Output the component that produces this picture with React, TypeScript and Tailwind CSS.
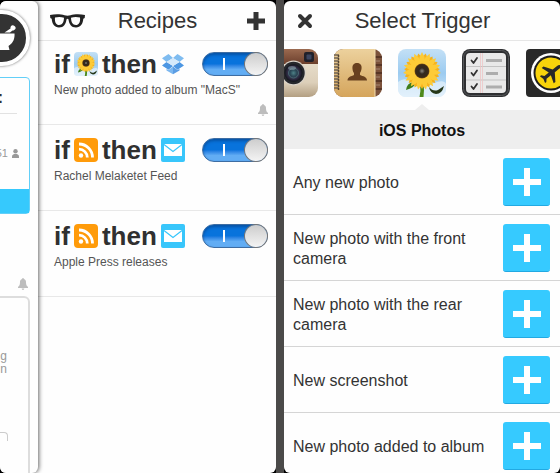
import { useId, useState, type ReactNode } from "react";

function Sunflower({ className }: { className: string }) {
  const id = useId();
  const petals = [0, 24, 48, 72, 96, 120, 144, 168, 192, 216, 240, 264, 288, 312, 336];
  return (
    <svg viewBox="0 0 48 48" className={className} aria-hidden="true">
      <defs>
        <linearGradient id={id} x1="0" y1="0" x2="0" y2="1">
          <stop offset="0" stopColor="#c3e0f6" />
          <stop offset="0.5" stopColor="#9ccbf0" />
          <stop offset="1" stopColor="#cfe7f8" />
        </linearGradient>
        <radialGradient id={`${id}c`}>
          <stop offset="0" stopColor="#8a8780" />
          <stop offset="0.4" stopColor="#33291f" />
          <stop offset="0.85" stopColor="#3a2a18" />
          <stop offset="1" stopColor="#8a5a18" />
        </radialGradient>
        <clipPath id={`${id}r`}>
          <rect width="48" height="48" rx="8" />
        </clipPath>
      </defs>
      <g clipPath={`url(#${id}r)`}>
        <rect width="48" height="48" fill={`url(#${id})`} />
        <path d="M0 33q6-5 12-1t10 5 14-3 12 1v13H0z" fill="#eef7fd" opacity="0.6" />
        <path d="M22 34q1 8-.5 14h4q1-7 0-14z" fill="#4f8a1c" />
        <path d="M8 41q1-7 7-8 3 0 3 1-2 5-10 7z" fill="#3f7d1c" />
        <path d="M31 38q4 5 9 3 3-2 6-4-2 8-8 8-6-1-7-7z" fill="#26381a" />
        {petals.map((a) => (
          <path key={a} d="M24 22Q17 12 24 4q7 8 0 18z" fill="#f6b21c" transform={`rotate(${a + 12} 24 22)`} />
        ))}
        {petals.map((a) => (
          <path key={a} d="M24 22Q18 12 24 3q6 9 0 19z" fill="#fdcb37" transform={`rotate(${a} 24 22)`} />
        ))}
        <circle cx="24" cy="22" r="7.500" fill={`url(#${id}c)`} />
      </g>
    </svg>
  );
}

function Instagram() {
  return (
    <svg viewBox="0 0 48 48" className="size-12" aria-hidden="true">
      <defs>
        <linearGradient id="ig-body" x1="0" y1="0" x2="0" y2="1">
          <stop offset="0" stopColor="#efe6d6" />
          <stop offset="0.7" stopColor="#dccfb9" />
          <stop offset="1" stopColor="#b39f82" />
        </linearGradient>
        <linearGradient id="ig-top" x1="0" y1="0" x2="0" y2="1">
          <stop offset="0" stopColor="#9b6a50" />
          <stop offset="1" stopColor="#6c3f2c" />
        </linearGradient>
        <radialGradient id="ig-lens">
          <stop offset="0" stopColor="#4f8288" />
          <stop offset="0.35" stopColor="#2c4a58" />
          <stop offset="0.7" stopColor="#2f2a42" />
          <stop offset="1" stopColor="#12151a" />
        </radialGradient>
      </defs>
      <rect width="48" height="48" rx="9" fill="url(#ig-body)" />
      <path d="M0 15V9a9 9 0 0 1 9-9h30a9 9 0 0 1 9 9v6z" fill="url(#ig-top)" />
      <rect x="34" y="3" width="10" height="10" rx="2" fill="#20202a" />
      <rect x="36.500" y="5.500" width="5" height="5" rx="1" fill="#3c4560" />
      <circle cx="23.500" cy="24" r="12.500" fill="#d8d2c8" />
      <circle cx="23.500" cy="24" r="11.200" fill="#26282c" />
      <circle cx="23.500" cy="24" r="9" fill="url(#ig-lens)" />
      <circle cx="23.500" cy="24" r="5" fill="none" stroke="#4e7078" strokeWidth="0.8" />
      <ellipse cx="22" cy="19" rx="4" ry="2" fill="#9cb4bb" opacity="0.5" />
    </svg>
  );
}

function Contacts() {
  const rings = [6, 9, 12, 15, 18, 21, 24, 27, 30, 33, 36, 39];
  return (
    <svg viewBox="0 0 48 48" className="size-12" aria-hidden="true">
      <defs>
        <linearGradient id="book" x1="0" y1="0" x2="0" y2="1">
          <stop offset="0" stopColor="#ecd19d" />
          <stop offset="1" stopColor="#d5a55c" />
        </linearGradient>
      </defs>
      <rect width="48" height="48" rx="9" fill="#7b523b" />
      <path d="M41 8h7M41 16h7M41 24h7M41 32h7M41 40h7" stroke="#4c2d1f" strokeWidth="1.5" />
      <path d="M42 12h4M42 20h4M42 28h4M42 36h4" stroke="#a58672" strokeWidth="1" />
      <path d="M9 0h32v48H9a9 9 0 0 1-9-9V9a9 9 0 0 1 9-9z" fill="url(#book)" />
      <path d="M41 0v48" stroke="#f3ddb2" strokeWidth="1" />
      {rings.map((y) => (
        <g key={y}>
          <path d={`M0 ${y}h5`} stroke="#6e6254" strokeWidth="1.300" />
          <circle cx="4.500" cy={y + 1} r="0.900" fill="#4b3d2e" />
        </g>
      ))}
      <path d="M23 14c3.500 0 5 2.500 4.500 6-.3 2-1 3-1.500 4v2c3 1.500 7 1.500 7 5.500H13.500c0-4 4-4 6.500-5.500v-2c-.8-1-1.300-2-1.500-4-.5-3.500 1-6 4.500-6z" fill="#68401f" />
    </svg>
  );
}

function Reminders() {
  return (
    <svg viewBox="0 0 48 48" className="size-12" aria-hidden="true">
      <rect width="48" height="48" rx="8" fill="#2e2f31" />
      <rect x="1.500" y="1.500" width="45" height="45" rx="7" fill="none" stroke="#56585b" strokeWidth="1" />
      <rect x="4" y="4" width="40" height="40" rx="4" fill="#e9e9e9" />
      <path d="M4 17.500h40M4 31h40" stroke="#c3c3c3" strokeWidth="1" />
      <path d="M18.500 4v40M20.500 4v40" stroke="#edc5c5" strokeWidth="0.8" />
      <g fill="none" stroke="#333" strokeWidth="1.800" strokeLinecap="round" strokeLinejoin="round">
        <path d="M9.500 11.500l2 2.500L15 9" />
        <path d="M9.500 24l2 2.500 3.500-5" />
        <path d="M9.500 37.500l2 2.500 3.500-5" />
      </g>
      <path d="M24 11.500h16M24 24.500h12M24 38h16" stroke="#adadad" strokeWidth="3" />
    </svg>
  );
}

function Flights() {
  return (
    <svg viewBox="0 0 48 48" className="size-12" aria-hidden="true">
      <rect width="48" height="48" rx="4" fill="#292929" />
      <circle cx="25" cy="24" r="20" fill="#fff" />
      <circle cx="25" cy="24" r="17.500" fill="#1d1d1d" />
      <circle cx="25" cy="24" r="15.500" fill="#f8d30b" />
      <path
        d="M25 12c1.100 0 1.700 1.300 1.700 3v5.500l8 5.500v2.200l-8-2.700v5.500l2.500 2.200v1.600L25 33.600l-4.200 1.200v-1.600l2.500-2.200v-5.500l-8 2.700V26l8-5.500V15c0-1.700.6-3 1.700-3z"
        fill="#292929"
        transform="rotate(52 25 24)"
      />
    </svg>
  );
}

function Feed() {
  return (
    <svg viewBox="0 0 24 24" className="size-6" aria-hidden="true">
      <rect width="24" height="24" rx="4" fill="#ff9b0a" />
      <circle cx="7" cy="17.500" r="2.200" fill="#fff" />
      <path d="M5 11.200a8.300 8.300 0 0 1 8.300 8.300M5 6a13.500 13.500 0 0 1 13.500 13.500" fill="none" stroke="#fff" strokeWidth="2.800" />
    </svg>
  );
}

function Mail() {
  return (
    <svg viewBox="0 0 24 24" className="size-6" aria-hidden="true">
      <rect width="24" height="24" rx="2" fill="#38c6fb" />
      <path d="M3 6h18v12H3z" fill="#fff" />
      <path d="M3 6.500l9 7 9-7" fill="none" stroke="#38c6fb" strokeWidth="1.200" />
    </svg>
  );
}

function Dropbox() {
  return (
    <svg viewBox="0 0 24 24" className="size-6" aria-hidden="true">
      <path d="M7.500 2L1 6.300 5.500 10 12 6zM16.500 2L23 6.300 18.500 10 12 6z" fill="#7fbcf0" />
      <path d="M1 13.600L5.500 10l6.500 4-4.500 3.800zM23 13.600L18.500 10 12 14l4.500 3.800z" fill="#4d97e3" />
      <path d="M5.500 10L12 6l6.500 4-6.500 4z" fill="#d4e9fb" />
      <path d="M5.500 16.800l2 1.300 4.500-3.700v7.800l-6.500-3.800z" fill="#7db8f0" />
      <path d="M18.500 16.800l-2 1.300-4.500-3.700v7.800l6.500-3.800z" fill="#5c9ee4" />
    </svg>
  );
}

function Bell() {
  return (
    <svg viewBox="0 0 10 12" className="h-3 w-[10px]" fill="#bdbdbd" aria-hidden="true">
      <path d="M5 0c.6 0 .9.400.9.900C7.500 1.300 8 2.600 8 4c0 3 .7 4 2 4.800V10H0V8.800C1.300 8 2 7 2 4c0-1.400.5-2.700 2.100-3.100C4.100.4 4.400 0 5 0zM3.700 10.600h2.600C6.300 11.500 5.800 12 5 12s-1.300-.5-1.300-1.400z" />
    </svg>
  );
}

function Glasses() {
  return (
    <svg viewBox="0 0 35 14" className="h-[14px] w-[35px]" fill="#222" fillRule="evenodd" aria-hidden="true">
      <path d="M0 1C5-.3 11 0 14.500 1.200c2 .6 4 .6 6 0C24 0 30-.3 35 1l-.3 3-1.400.8C33 10 30.500 13.500 26 13.500c-4.800 0-6.800-3.500-7.500-8-.4-1-1.600-1-2 0-.7 4.500-2.700 8-7.500 8-4.500 0-7-3.500-7.300-8.700L.3 4zM5 3.600C4.500 7.500 5.800 11 9 11c3.500 0 4.800-3 5-7.200C11.500 2.900 8 2.700 5 3.600zM30 3.600C27 2.700 23.500 2.900 21 3.800c.2 4.200 1.500 7.200 5 7.200 3.200 0 4.500-3.500 4-7.400z" />
    </svg>
  );
}

function Cross({ className }: { className: string }) {
  return (
    <svg viewBox="0 0 18 18" className={className} fill="currentColor" aria-hidden="true">
      <path d="M6.500 0h5v6.500H18v5h-6.500V18h-5v-6.500H0v-5h6.500z" />
    </svg>
  );
}

function Switch({ label }: { label: string }) {
  const [on, setOn] = useState(true);
  const track = on
    ? "flex-row bg-linear-to-b from-[#0873dc] from-50% to-[#62adf4] to-75% shadow-[inset_0_2px_3px_#0753a5]"
    : "flex-row-reverse bg-[#ddd] shadow-[inset_0_2px_3px_#999]";
  return (
    <label className={`relative ml-auto flex h-6 w-[66px] cursor-pointer items-center rounded-full border border-[#3d6da3] ${track}`}>
      <input type="checkbox" aria-label={label} checked={on} onChange={() => setOn(!on)} className="sr-only" />
      <span className="flex grow justify-center">
        <span className="h-3 w-[2px] bg-white" />
      </span>
      <span className="size-[22px] shrink-0 rounded-full bg-linear-to-b from-[#cdcdcd] to-[#f4f4f4] ring-1 ring-[#777]" />
    </label>
  );
}

function Header({ title, left, right }: { title: string; left: ReactNode; right?: ReactNode }) {
  return (
    <header className="grid h-10 shrink-0 grid-cols-[1fr_auto_1fr] items-center border-b border-[#e6e6e6] pr-[11px] pl-3 text-[#333]">
      <div className="flex">{left}</div>
      <h1 className="text-[22px] leading-6">{title}</h1>
      <div className="flex justify-end">{right}</div>
    </header>
  );
}

type RecipeProps = { trigger: ReactNode; action: ReactNode; text: string; bell?: boolean };

function Recipe({ trigger, action, text, bell }: RecipeProps) {
  return (
    <li className="flex h-[86px] flex-col border-b border-[#e8e8e8] pt-[13px] pr-2 pl-4 first:h-[84px] first:pt-[11px]">
      <div className="flex h-6 items-center text-[26px] leading-6 font-bold text-[#303030]">
        <span>if</span>
        <span className="ml-1">{trigger}</span>
        <span className="ml-1">then</span>
        <span className="ml-1">{action}</span>
        <Switch label={text} />
      </div>
      <p className="mt-[6px] text-xs leading-4 text-[#555]">{text}</p>
      {bell && (
        <div className="mt-[6px] flex justify-end">
          <Bell />
        </div>
      )}
    </li>
  );
}

function Drawer() {
  return (
    <aside className="z-10 flex w-[38px] shrink-0 flex-col items-end overflow-hidden rounded-r-md bg-[#fefefe] pr-2 text-[#999] shadow-[1px_0_4px_#0009]">
      <div className="mt-[9px] flex size-[56px] shrink-0 items-center justify-center rounded-full border-4 border-white bg-[#333] shadow-[0_0_3px_#0009]">
        <svg viewBox="0 0 48 48" className="size-12" fill="#fff" aria-hidden="true">
          <path d="M10 19.500h26.500c.5 6-2 10-6 12.500l1 4H15l1-4c-4-2.500-6.500-6.500-6-12.500z" />
          <path d="M26.500 18.500l6-4c-.5-2.500 2-4.500 4-2.500 2.500 2 .5 4.500-2 4.500L32 18.500z" />
        </svg>
      </div>
      <section className="mt-[11px] flex h-[137px] w-[120px] shrink-0 flex-col items-end rounded-[4px] border border-[#62cff8]">
        <span className="mt-[10px] mr-[26px] text-base leading-5 font-bold text-[#333]">:</span>
        <hr className="mt-[5px] mr-3 w-24 border-[#e2e2e2]" />
        <span className="mt-[31px] mr-[10px] flex items-center gap-1 text-[11px] leading-4">
          51
          <svg viewBox="0 0 7 9" className="h-[9px] w-[7px]" fill="currentColor" aria-hidden="true">
            <circle cx="3.500" cy="2.200" r="2.200" />
            <path d="M0 9V7.500C0 5.500 2 5 3.500 5S7 5.500 7 7.500V9z" />
          </svg>
        </span>
        <div className="mt-auto h-6 w-full bg-[#36c9fd]" />
      </section>
      <div className="mt-[64px] mr-[2px] shrink-0">
        <Bell />
      </div>
      <section className="mt-[6px] flex h-[190px] w-[120px] shrink-0 flex-col items-end rounded-md border-2 border-[#ddd]">
        <p className="mt-[52px] mr-[21px] text-right text-xs leading-[13px]">
          g
          <br />
          n
        </p>
        <div className="mt-[56px] mr-5 h-[9px] w-16 rounded-tr border-t border-r border-[#ccc]" />
      </section>
    </aside>
  );
}

const triggers = [
  "Any new photo",
  "New photo with the front camera",
  "New photo with the rear camera",
  "New screenshot",
  "New photo added to album",
];

const channels = [
  { name: "Instagram", icon: <Instagram /> },
  { name: "iOS Contacts", icon: <Contacts /> },
  { name: "iOS Photos", icon: <Sunflower className="size-12" /> },
  { name: "iOS Reminders", icon: <Reminders /> },
  { name: "Flights", icon: <Flights /> },
];

export default function App() {
  return (
    <div className="grid h-screen grid-cols-2 gap-2 overflow-hidden bg-[#4b4a49] font-['Liberation_Sans',Arial,sans-serif]">
      <div className="flex min-h-0 bg-black pt-px">
        <div className="flex min-w-0 flex-1 overflow-hidden rounded-md bg-[#fefefe]">
          <Drawer />
          <main className="min-w-0 flex-1">
            <Header
              title="Recipes"
              left={
                <button type="button" aria-label="Browse recipes">
                  <Glasses />
                </button>
              }
              right={
                <button type="button" aria-label="Add recipe">
                  <Cross className="size-[18px]" />
                </button>
              }
            />
            <ul>
              <Recipe trigger={<Sunflower className="size-6" />} action={<Dropbox />} text={'New photo added to album "MacS"'} bell />
              <Recipe trigger={<Feed />} action={<Mail />} text="Rachel Melaketet Feed" />
              <Recipe trigger={<Feed />} action={<Mail />} text="Apple Press releases" />
            </ul>
          </main>
        </div>
      </div>
      <div className="flex min-h-0 bg-black pt-px">
        <main className="min-w-0 flex-1 overflow-hidden rounded-md bg-[#fefefe]">
          <Header
            title="Select Trigger"
            left={
              <button type="button" aria-label="Close">
                <svg viewBox="0 0 18 18" className="size-[18px]" stroke="#333" strokeWidth="4" strokeLinecap="round" aria-hidden="true">
                  <path d="M4 4l10 10M14 4L4 14" />
                </svg>
              </button>
            }
          />
          <nav aria-label="Channels" className="flex justify-center gap-4 pt-2">
            {channels.map((c) => (
              <button key={c.name} type="button" aria-label={c.name} className="shrink-0">
                {c.icon}
              </button>
            ))}
          </nav>
          <svg viewBox="0 0 14 6" className="mx-auto mt-[7px] h-[6px] w-[14px]" fill="#eee" aria-hidden="true">
            <path d="M0 6l7-6 7 6z" />
          </svg>
          <h2 className="bg-[#eee] pt-[9px] pb-[7px] text-center text-base leading-[23px] font-bold text-[#111]">iOS Photos</h2>
          <ul>
            {triggers.map((t) => (
              <li key={t} className="flex h-[66px] items-center justify-between border-b border-[#d5d5d5] pt-px pr-[10px] pl-[9px]">
                <span className="w-[180px] shrink-0 grow pt-[2px] text-base leading-5 text-[#333]">{t}</span>
                <button
                  type="button"
                  aria-label={`Add ${t}`}
                  className="flex h-12 w-[47px] shrink-0 items-center justify-center rounded-[3px] border-b border-[#22a9e2] bg-[#36caff] text-white"
                >
                  <svg viewBox="0 0 28 28" className="size-7" fill="currentColor" aria-hidden="true">
                    <path d="M11 0h6v11h11v6H17v11h-6V17H0v-6h11z" />
                  </svg>
                </button>
              </li>
            ))}
          </ul>
        </main>
      </div>
    </div>
  );
}
